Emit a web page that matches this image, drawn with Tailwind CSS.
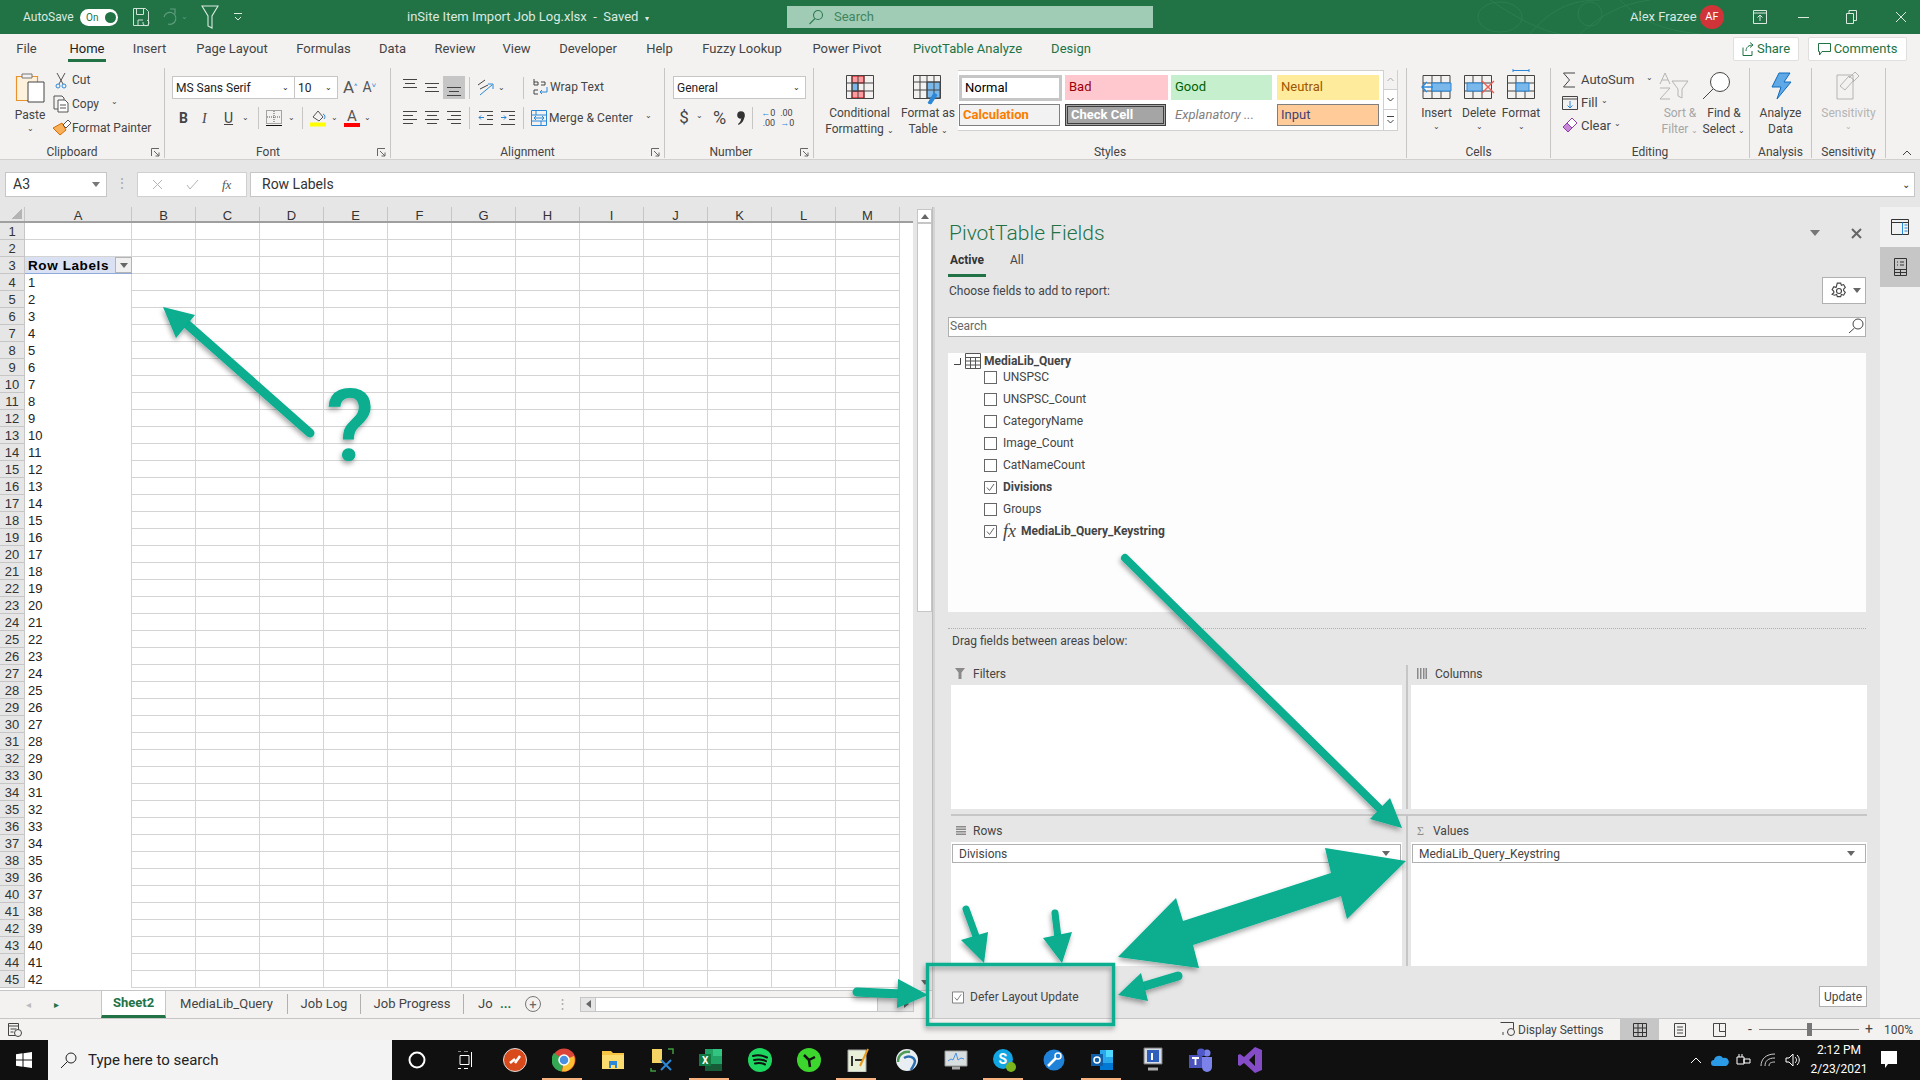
<!DOCTYPE html>
<html lang="en">
<head>
  <meta charset="UTF-8">
  <title>inSite Item Import Job Log.xlsx - Excel</title>
  <script src="https://cdn.jsdelivr.net/npm/@tailwindcss/browser@4"></script>
</head>
<body class="relative w-[1920px] h-[1080px] overflow-hidden flex flex-col bg-[#e6e6e6] text-[12px] text-[#444] font-['Roboto','Liberation_Sans',sans-serif]">

  <!-- title bar -->
  <header class="relative h-[34px] flex items-center bg-[#217346] text-[#dbe9e1] shrink-0">
    <svg class="absolute left-[1470px] top-0" width="240" height="34" fill="none" stroke="#2c7d50" stroke-width="1"><ellipse cx="30" cy="17" rx="22" ry="15"/><path d="M20 0c30 20 50 30 70 34M60 34C80 10 100 0 130 0M110 34c20-18 40-30 70-34M150 0c20 20 40 30 80 34"/><circle cx="120" cy="14" r="12"/></svg>
    <span class="ml-[23px] w-[57px]">AutoSave</span>
    <span class="w-[38px] h-[17px] rounded-full bg-white flex items-center justify-between pl-[6px] pr-[2px] text-[10px] text-[#217346]">On<i class="w-[11px] h-[11px] rounded-full bg-[#217346]"></i></span>
    <svg class="ml-[14px]" width="18" height="20" viewBox="0 0 18 20" fill="none" stroke="#cfe3d8"><path d="M1.5 1.5h12l3 3v14h-15zM4.500 1.500v6h7v-6M6 19v-6h5"/><path d="M11 15a3 3 0 1 0 4-2" stroke-width="1"/></svg>
    <svg class="ml-[11px]" width="16" height="18" viewBox="0 0 16 18" fill="none" stroke="#5d9c7b" stroke-width="1.200"><path d="M3 9a6 6 0 1 1 4 7M9 1h5v5"/></svg>
    <span class="ml-[4px] text-[8px] text-[#5d9c7b]">⌄</span>
    <svg class="ml-[13px]" width="18" height="24" viewBox="0 0 18 24" fill="none" stroke="#dbe9e1" stroke-width="1.100"><path d="M1 1h16l-6 10v12l-4-2V11z"/></svg>
    <svg class="ml-[15px]" width="8" height="10" viewBox="0 0 8 10" fill="none" stroke="#dbe9e1"><path d="M0 1.500h8M1 5l3 3 3-3"/></svg>
    <span class="ml-[165px] w-[264px] text-[13px] whitespace-nowrap">inSite Item Import Job Log.xlsx&nbsp; -&nbsp; Saved&nbsp; <i class="not-italic text-[8px]">▾</i></span>
    <div class="ml-[116px] w-[366px] h-[22px] bg-[#a0ccb5] flex items-center pl-[21px] text-[#4f8b6c]">
      <svg width="16" height="16" viewBox="0 0 16 16" fill="none" stroke="#2f7a52" stroke-width="1.100"><circle cx="10" cy="6" r="4.500"/><path d="M7 9.500 1.500 15"/></svg>
      <span class="ml-[10px] text-[13px] text-[#3f8560]">Search</span>
    </div>
    <span class="ml-[477px] text-[13px] w-[64px] whitespace-nowrap">Alex Frazee</span>
    <span class="ml-[6px] w-[24px] h-[24px] rounded-full bg-[#d13438] text-white text-[11px] flex items-center justify-center">AF</span>
    <svg class="ml-[29px]" width="14" height="14" viewBox="0 0 14 14" fill="none" stroke="#dbe9e1"><path d="M.5.500h13v13H.500zM.5 3h13M7 11V5M4.500 7.500 7 5l2.500 2.500"/></svg>
    <span class="ml-[31px] w-[11px] h-px bg-[#dbe9e1]"></span>
    <svg class="ml-[37px]" width="11" height="14" viewBox="0 0 11 14" fill="none" stroke="#dbe9e1"><path d="M.5 3.500h7v10h-7zM3 3.500v-3h7.500v10H7.500"/></svg>
    <svg class="ml-[38px]" width="12" height="12" viewBox="0 0 12 12" stroke="#dbe9e1"><path d="m1 1 10 10M11 1 1 11"/></svg>
  </header>

  <!-- tabs -->
  <nav class="relative h-[28px] shrink-0 flex items-center bg-[#f3f2f1] pt-[2px] text-[13px] text-[#444] whitespace-nowrap">
    <a class="ml-[17px] w-[19px] flex justify-center">File</a>
    <a class="relative ml-[32px] w-[38px] flex justify-center text-[#222] leading-[26px]">Home<i class="absolute left-0 right-0 bottom-0 h-[3px] bg-[#217346]"></i></a>
    <a class="ml-[27px] w-[33px] flex justify-center">Insert</a>
    <a class="ml-[30px] w-[72px] flex justify-center">Page Layout</a>
    <a class="ml-[29px] w-[53px] flex justify-center">Formulas</a>
    <a class="ml-[29px] w-[27px] flex justify-center">Data</a>
    <a class="ml-[29px] w-[40px] flex justify-center">Review</a>
    <a class="ml-[28px] w-[27px] flex justify-center">View</a>
    <a class="ml-[28px] w-[60px] flex justify-center">Developer</a>
    <a class="ml-[28px] w-[27px] flex justify-center">Help</a>
    <a class="ml-[30px] w-[78px] flex justify-center">Fuzzy Lookup</a>
    <a class="ml-[32px] w-[68px] flex justify-center">Power Pivot</a>
    <a class="ml-[33px] w-[107px] flex justify-center text-[#217346]">PivotTable Analyze</a>
    <a class="ml-[30px] w-[40px] flex justify-center text-[#217346]">Design</a>
    <a class="ml-[642px] w-[66px] h-[24px] bg-white border border-[#e1dfdd] rounded-[2px] flex items-center justify-center gap-[3px] text-[#217346]">
      <svg width="12" height="14" viewBox="0 0 12 14" fill="none" stroke="#217346"><path d="M1 5.500v8h9V9M4 9c0-4 3-6 7-6M8 .5 11 3 8 5.500"/></svg>Share</a>
    <a class="ml-[9px] w-[99px] h-[24px] bg-white border border-[#e1dfdd] rounded-[2px] flex items-center justify-center gap-[3px] text-[#217346]">
      <svg width="13" height="13" viewBox="0 0 13 13" fill="none" stroke="#217346"><path d="M.5.500h12v8H4L1.500 12V8.500h-1z"/></svg>Comments</a>
  </nav>

  <!-- ribbon -->
  <section class="relative h-[98px] shrink-0 flex bg-[#f3f2f1] border-b border-[#d2d0ce] pt-[6px] text-[12px] text-[#444] whitespace-nowrap">

    <!-- clipboard -->
    <div class="relative w-[165px] h-[90px] flex flex-col border-r border-[#c8c6c4]">
      <div class="flex h-[72px]">
        <div class="w-[53px] flex flex-col items-center pl-[7px]">
          <svg class="mt-[3px]" width="30" height="32" viewBox="0 0 30 32" fill="none"><path d="M1.500 5.500h21v24h-21z" fill="#fff2dc" stroke="#e8912d" stroke-width="1.200"/><path d="M7 3h10v4H7z" fill="#f3f2f1" stroke="#777"/><path d="M13 11h16v20H13z" fill="#fff" stroke="#444"/></svg>
          <span class="mt-[4px] leading-[16px]">Paste</span>
          <span class="text-[8px] leading-[12px]">⌄</span>
        </div>
        <div class="flex flex-col">
          <div class="h-[24px] flex items-center"><svg class="w-[19px]" width="19" height="17" viewBox="0 0 19 17" fill="none" stroke="#555"><path d="m4 1 6 11M12 1 6 12"/><circle cx="5" cy="14" r="2" stroke="#2b88d8"/><circle cx="11" cy="14" r="2" stroke="#2b88d8"/></svg><span>Cut</span></div>
          <div class="h-[24px] flex items-center"><svg width="19" height="18" viewBox="0 0 19 18" fill="none" stroke="#555"><path d="M1 1h8l2 2v11H1z" fill="#f3f2f1"/><path d="M5 5h7l3 3v9H5z" fill="#fff"/><path d="M7 10h6M7 13h6"/></svg><span>Copy</span><span class="ml-[12px] text-[8px] pb-[4px]">⌄</span></div>
          <div class="h-[24px] flex items-center"><svg width="19" height="16" viewBox="0 0 19 16"><path d="M0 8 9 3l4 7-6 5z" fill="#f9b05a" stroke="#d86c00"/><path d="m10 5 5-5 3 3-5 5z" fill="#fff" stroke="#555"/></svg><span>Format Painter</span></div>
        </div>
      </div>
      <div class="h-[18px] text-center leading-[24px] pr-[20px]">Clipboard</div>
      <svg class="absolute right-[4px] bottom-[1px]" width="9" height="9" viewBox="0 0 9 9" fill="none" stroke="#666"><path d="M.5 8V.500H8M3 3l5 5M8 4.500V8H4.500"/></svg>
    </div>

    <!-- font -->
    <div class="relative w-[226px] h-[90px] flex flex-col border-r border-[#c8c6c4] pl-[7px]">
      <div class="h-[72px] pt-[8px]">
        <div class="flex h-[23px] items-center">
          <div class="w-[123px] h-[23px] bg-white border border-[#c8c6c4] flex items-center justify-between pl-[3px] pr-[5px] text-[#222]">MS Sans Serif<span class="text-[8px]">⌄</span></div>
          <div class="w-[43px] h-[23px] bg-white border border-l-0 border-[#c8c6c4] flex items-center justify-between pl-[3px] pr-[5px] text-[#222]">10<span class="text-[8px]">⌄</span></div>
          <span class="ml-[5px] text-[17px] text-[#555]">A<sup class="text-[8px] text-[#2b88d8]">^</sup></span>
          <span class="ml-[5px] text-[14px] text-[#555]">A<sup class="text-[8px] text-[#2b88d8]">˅</sup></span>
        </div>
        <div class="flex h-[24px] mt-[7px] items-center text-[14px]">
          <span class="ml-[7px] w-[13px] font-bold">B</span>
          <span class="ml-[10px] w-[10px] italic font-['Liberation_Serif']">I</span>
          <span class="ml-[12px] w-[12px] underline">U</span>
          <span class="ml-[6px] text-[8px]">⌄</span>
          <i class="ml-[9px] w-px h-[22px] bg-[#c8c6c4]"></i>
          <svg class="ml-[7px]" width="16" height="16" viewBox="0 0 16 16" fill="none" stroke="#555" stroke-dasharray="1 1"><path d="M.5.500h15v13H.500zM8 1v12M1 7h14"/><path d="M0 15.500h16" stroke="#111" stroke-dasharray="none"/></svg>
          <span class="ml-[6px] text-[8px]">⌄</span>
          <i class="ml-[7px] w-px h-[22px] bg-[#c8c6c4]"></i>
          <svg class="ml-[7px]" width="16" height="18" viewBox="0 0 16 18" fill="none" stroke="#555"><path d="m3 8 5-6 5 6-4 4z"/><path d="M13 5a3 3 0 0 1 1 5" stroke="#2b88d8"/><path d="M0 15.500h16" stroke="#ff0" stroke-width="4"/></svg>
          <span class="ml-[5px] text-[8px]">⌄</span>
          <span class="relative ml-[6px] w-[16px] h-[18px] text-center leading-[14px] text-[15px] text-[#555]">A<i class="absolute left-0 right-0 bottom-0 h-[4px] bg-[#f00]"></i></span>
          <span class="ml-[4px] text-[8px]">⌄</span>
        </div>
      </div>
      <div class="h-[18px] text-center leading-[24px] pr-[26px]">Font</div>
      <svg class="absolute right-[4px] bottom-[1px]" width="9" height="9" viewBox="0 0 9 9" fill="none" stroke="#666"><path d="M.5 8V.500H8M3 3l5 5M8 4.500V8H4.500"/></svg>
    </div>

    <!-- alignment -->
    <div class="relative w-[274px] h-[90px] flex flex-col border-r border-[#c8c6c4]">
      <div class="h-[72px] pt-[8px] pl-[8px]">
        <div class="flex h-[23px] items-center">
          <svg width="22" height="23" viewBox="0 0 22 23" stroke="#444"><path d="M4 3.500h14M6 7.500h10M4 11.500h14"/></svg>
          <svg width="22" height="23" viewBox="0 0 22 23" stroke="#444"><path d="M4 7.500h14M6 11.500h10M4 15.500h14"/></svg>
          <span class="w-[22px] h-[23px] bg-[#c6c6c6] flex items-center"><svg width="22" height="23" viewBox="0 0 22 23" stroke="#444"><path d="M4 11.500h14M6 15.500h10M4 19.500h14"/></svg></span>
          <i class="ml-[4px] w-px h-[22px] bg-[#c8c6c4]"></i>
          <svg class="ml-[7px]" width="18" height="18" viewBox="0 0 18 18" fill="none" stroke="#444"><path d="m1 6 7-5M3 10l8-4"/><path d="m3 16 12-10M11 5h5v5" stroke="#2b88d8"/></svg>
          <span class="ml-[3px] text-[8px]">⌄</span>
          <i class="ml-[18px] w-px h-[22px] bg-[#c8c6c4]"></i>
          <svg class="ml-[9px]" width="17" height="19" viewBox="0 0 17 19" fill="none" stroke="#444"><path d="M1 1v6h4V4H1M8 4h4v3H8M5 12H1v4h4"/><path d="M14 9v5H7m2-2-2 2 2 2" stroke="#2b88d8"/></svg>
          <span class="leading-[13px] tracking-[.1px]">Wrap Text</span>
        </div>
        <div class="flex h-[24px] mt-[7px] items-center">
          <svg width="22" height="18" viewBox="0 0 22 18" stroke="#444"><path d="M4 2.500h14M4 6.500h10M4 10.500h14M4 14.500h10"/></svg>
          <svg width="22" height="18" viewBox="0 0 22 18" stroke="#444"><path d="M4 2.500h14M6 6.500h10M4 10.500h14M6 14.500h10"/></svg>
          <svg width="22" height="18" viewBox="0 0 22 18" stroke="#444"><path d="M4 2.500h14M8 6.500h10M4 10.500h14M8 14.500h10"/></svg>
          <i class="ml-[4px] w-px h-[22px] bg-[#c8c6c4]"></i>
          <svg class="ml-[8px]" width="16" height="16" viewBox="0 0 16 16" fill="none" stroke="#444"><path d="M1 1.500h14M9 5.500h6M9 9.500h6M1 14.500h14"/><path d="M6 7.500H1m2-2-2 2 2 2" stroke="#2b88d8"/></svg>
          <svg class="ml-[6px]" width="16" height="16" viewBox="0 0 16 16" fill="none" stroke="#444"><path d="M1 1.500h14M9 5.500h6M9 9.500h6M1 14.500h14"/><path d="M1 7.500h5m-2-2 2 2-2 2" stroke="#2b88d8"/></svg>
          <i class="ml-[7px] w-px h-[22px] bg-[#c8c6c4]"></i>
          <svg class="ml-[7px]" width="16" height="16" viewBox="0 0 16 16" fill="none" stroke="#2b88d8"><path d="M.5.500h15v15H.500zM.5 5h15M.5 11h15M5 .5V5M10 11v4.500"/><path d="M3 8h10M5 6 3 8l2 2M11 6l2 2-2 2"/></svg>
          <span class="ml-[2px] leading-[13px] tracking-[.1px]">Merge &amp; Center</span>
          <span class="ml-[12px] text-[8px] pb-[4px]">⌄</span>
        </div>
      </div>
      <div class="h-[18px] text-center leading-[24px]">Alignment</div>
      <svg class="absolute right-[4px] bottom-[1px]" width="9" height="9" viewBox="0 0 9 9" fill="none" stroke="#666"><path d="M.5 8V.500H8M3 3l5 5M8 4.500V8H4.500"/></svg>
    </div>

    <!-- number -->
    <div class="relative w-[149px] h-[90px] flex flex-col border-r border-[#c8c6c4] pl-[8px]">
      <div class="h-[72px] pt-[8px]">
        <div class="w-[133px] h-[23px] bg-white border border-[#c8c6c4] flex items-center justify-between pl-[3px] pr-[5px] text-[#222]">General<span class="text-[8px]">⌄</span></div>
        <div class="flex h-[24px] mt-[7px] items-center text-[#444]">
          <span class="ml-[5px] w-[12px] text-[17px] text-center">$</span>
          <span class="ml-[6px] text-[8px] pb-[4px]">⌄</span>
          <span class="ml-[10px] text-[18px] leading-[18px]">%</span>
          <svg class="ml-[11px]" width="8" height="14" viewBox="0 0 8 14" fill="#333"><circle cx="4" cy="4" r="3.800"/><path d="M7.500 4.500C7.500 9 5 12.500 1.500 14L1 13c2-1.500 3-3.500 3-5z"/></svg>
          <i class="ml-[7px] w-px h-[22px] bg-[#c8c6c4]"></i>
          <span class="ml-[5px] w-[17px] text-[9px] leading-[10px] text-right"><i class="not-italic text-[#2b88d8]">←</i>0<br>.00</span>
          <span class="ml-[5px] w-[17px] text-[9px] leading-[10px]">.00<br><i class="not-italic text-[#2b88d8]">→</i>0</span>
        </div>
      </div>
      <div class="h-[18px] text-center leading-[24px] pr-[24px]">Number</div>
      <svg class="absolute right-[4px] bottom-[1px]" width="9" height="9" viewBox="0 0 9 9" fill="none" stroke="#666"><path d="M.5 8V.500H8M3 3l5 5M8 4.500V8H4.500"/></svg>
    </div>

    <!-- styles -->
    <div class="w-[593px] h-[90px] flex flex-col border-r border-[#c8c6c4]">
      <div class="h-[72px] flex">
        <div class="w-[75px] ml-[8px] flex flex-col items-center">
          <svg class="mt-[7px]" width="28" height="24" viewBox="0 0 28 24" fill="none" stroke="#444"><path d="M6 1h12v7H6zM6 16h12v7H6z" fill="#ff9b9f" stroke="#c00"/><path d="M6 8h6v8H6z" fill="#7ab8ec"/><path d="M.5.500h27v23H.500zM.5 8h27M.5 16h27M6 .5v23M12 .5v23M18 .5v23"/></svg>
          <span class="mt-[6px] leading-[16px]">Conditional</span>
          <span class="leading-[16px]">Formatting <i class="not-italic text-[8px]">⌄</i></span>
        </div>
        <div class="w-[62px] flex flex-col items-center">
          <svg class="mt-[7px]" width="30" height="30" viewBox="0 0 30 30" fill="none" stroke="#444"><path d="M14 7h13v16H14z" fill="#7ab8ec"/><path d="M.5.500h27v23H.500zM.5 7h27M.5 15h27M7 .5v23M14 .5v23M21 .5v23"/><path d="m15 28 6-10 3 2-6 9z" fill="#2b88d8" stroke="#2b88d8"/></svg>
          <span class="leading-[16px]">Format as</span>
          <span class="leading-[16px]">Table <i class="not-italic text-[8px]">⌄</i></span>
        </div>
        <!-- cell styles gallery -->
        <div class="-ml-[1px] mt-[2px] w-[440px] h-[61px] flex bg-white border-y border-[#d2d0ce] text-[13px]">
          <div class="w-[425px] grid grid-cols-[106px_106px_106px_102px] grid-rows-[25px_22px] gap-y-[4px] pt-[4px] pl-[1px]">
            <div class="w-[103px] h-[26px] border-[3px] border-[#c6c6c6] bg-white text-black flex items-center pl-[3px] pb-[1px]">Normal</div>
            <div class="w-[103px] bg-[#ffc7ce] text-[#9c0006] flex items-center pl-[4px] pb-[1px]">Bad</div>
            <div class="w-[101px] bg-[#c6efce] text-[#006100] flex items-center pl-[4px] pb-[1px]">Good</div>
            <div class="bg-[#ffeb9c] text-[#9c5700] flex items-center pl-[4px] pb-[1px]">Neutral</div>
            <div class="w-[101px] bg-[#f2f2f2] border border-[#7f7f7f] text-[#fa7d00] font-bold flex items-center pl-[3px]">Calculation</div>
            <div class="w-[101px] bg-[#a5a5a5] border-[3px] border-double border-[#3f3f3f] text-white font-bold flex items-center pl-[3px]">Check Cell</div>
            <div class="w-[101px] text-[#7f7f7f] italic flex items-center pl-[4px]">Explanatory ...</div>
            <div class="bg-[#ffcc99] border border-[#7f7f7f] text-[#3f3f76] flex items-center pl-[3px]">Input</div>
          </div>
          <div class="w-[15px] flex flex-col border-x border-[#d2d0ce] -my-px bg-[#f3f2f1]">
            <span class="h-[20px] flex items-center justify-center"><svg width="7" height="5" viewBox="0 0 7 5" fill="none" stroke="#aaa"><path d="m.5 4 3-3 3 3"/></svg></span>
            <span class="h-[21px] flex items-center justify-center bg-white border-y border-[#d2d0ce]"><svg width="7" height="5" viewBox="0 0 7 5" fill="none" stroke="#444"><path d="m.5 1 3 3 3-3"/></svg></span>
            <span class="h-[22px] flex items-center justify-center bg-white border-b border-[#d2d0ce]"><svg width="7" height="8" viewBox="0 0 7 8" fill="none" stroke="#444"><path d="M0 .5h7M.5 4l3 3 3-3"/></svg></span>
          </div>
        </div>
      </div>
      <div class="h-[18px] text-center leading-[24px]">Styles</div>
    </div>

    <!-- cells -->
    <div class="w-[144px] h-[90px] flex flex-col border-r border-[#c8c6c4]">
      <div class="h-[72px] flex pl-[8px]">
        <div class="w-[43px] flex flex-col items-center">
          <svg class="mt-[7px]" width="32" height="24" viewBox="0 0 32 24" fill="none" stroke="#444"><path d="M2 .5h27v23H2zM2 8h27M2 16h27M11 .5v23M20 .5v23"/><path d="M11 8h19v8H11z" fill="#7ab8ec" stroke="#2b88d8"/><path d="M12 12H1m5-5-5 5 5 5" stroke="#2b88d8" stroke-width="1.500" fill="#fff"/></svg>
          <span class="mt-[6px] leading-[16px]">Insert</span><span class="text-[8px] leading-[12px]">⌄</span>
        </div>
        <div class="w-[42px] flex flex-col items-center">
          <svg class="mt-[7px]" width="32" height="24" viewBox="0 0 32 24" fill="none" stroke="#444"><path d="M1.500.5h27v23h-27zM1.500 8h27M1.500 16h27M10 .5v23M19 .5v23"/><path d="M4 8h15v8H4z" fill="#7ab8ec" stroke="#2b88d8"/><path d="m19 6 12 12M31 6 19 18" stroke="#f25c54" stroke-width="1.400"/></svg>
          <span class="mt-[6px] leading-[16px]">Delete</span><span class="text-[8px] leading-[12px]">⌄</span>
        </div>
        <div class="w-[42px] flex flex-col items-center">
          <svg class="mt-[1px]" width="28" height="30" viewBox="0 0 28 30" fill="none" stroke="#444"><path d="M6 1.500h16M6 0v3M22 0v3" stroke="#2b88d8"/><path d="M.5 6.500h27v23H.5zM.5 14h27M.5 22h27M9 6.500v23M18 6.500v23"/><path d="M9 14h13v8H9z" fill="#7ab8ec" stroke="#2b88d8"/></svg>
          <span class="mt-[6px] leading-[16px]">Format</span><span class="text-[8px] leading-[12px]">⌄</span>
        </div>
      </div>
      <div class="h-[18px] text-center leading-[24px]">Cells</div>
    </div>

    <!-- editing -->
    <div class="w-[199px] h-[90px] flex flex-col border-r border-[#c8c6c4]">
      <div class="h-[72px] flex pl-[11px]">
        <div class="w-[96px] flex flex-col">
          <div class="h-[23px] flex items-center"><svg width="19" height="16" viewBox="0 0 19 16" fill="none" stroke="#444"><path d="M13 1H1.500l6 7-6 7H13"/></svg><span class="text-[13px]">AutoSum</span><span class="ml-[12px] text-[8px] pb-[4px]">⌄</span></div>
          <div class="h-[23px] flex items-center"><svg width="19" height="14" viewBox="0 0 19 14" fill="none" stroke="#444"><path d="M.5.500h15v13H.500zM.5 3h15"/><path d="M8 5v7M5.500 9.500 8 12l2.500-2.500" stroke="#2b88d8"/></svg><span class="text-[13px]">Fill</span><span class="ml-[3px] text-[8px] pb-[4px]">⌄</span></div>
          <div class="h-[23px] flex items-center"><svg width="19" height="17" viewBox="0 0 19 17" stroke="#8f3fa8"><path d="m1 10 9-9 5 5-9 9z" fill="#fff"/><path d="m1 10 5 5 4-4-5-5z" fill="#c987d9"/></svg><span class="text-[13px]">Clear</span><span class="ml-[3px] text-[8px] pb-[4px]">⌄</span></div>
        </div>
        <div class="w-[44px] flex flex-col items-center text-[#a6a6a6]">
          <svg class="mt-[4px] -ml-[12px]" width="30" height="28" viewBox="0 0 30 28" fill="none" stroke="#b4b4b4"><path d="m1 12 5-11 5 11M3 8h6M1 16h10L1 27h10"/><path d="M13 9h16l-6 8v9l-4-2v-7z"/></svg>
          <span class="mt-[5px] leading-[16px]">Sort &amp;</span>
          <span class="leading-[16px]">Filter <i class="not-italic text-[8px]">⌄</i></span>
        </div>
        <div class="w-[44px] flex flex-col items-center">
          <svg class="mt-[4px] -ml-[16px]" width="30" height="28" viewBox="0 0 30 28" fill="none" stroke="#444"><circle cx="19" cy="10" r="9.500" fill="#fff"/><path d="m12 17-10 10"/></svg>
          <span class="mt-[5px] leading-[16px]">Find &amp;</span>
          <span class="leading-[16px]">Select <i class="not-italic text-[8px]">⌄</i></span>
        </div>
      </div>
      <div class="h-[18px] text-center leading-[24px]">Editing</div>
    </div>

    <!-- analysis -->
    <div class="w-[62px] h-[90px] flex flex-col border-r border-[#c8c6c4] items-center">
      <div class="h-[72px] flex flex-col items-center">
        <svg class="mt-[4px]" width="22" height="28" viewBox="0 0 22 28"><path d="M9 1h11l-6 9h7L7 27l4-12H2z" fill="#5ea9e6" stroke="#0f6cbd"/></svg>
        <span class="mt-[5px] leading-[16px]">Analyze</span><span class="leading-[16px]">Data</span>
      </div>
      <div class="h-[18px] leading-[24px]">Analysis</div>
    </div>

    <!-- sensitivity -->
    <div class="w-[74px] h-[90px] flex flex-col border-r border-[#c8c6c4] items-center">
      <div class="h-[72px] flex flex-col items-center text-[#b4b4b4]">
        <svg class="mt-[4px]" width="28" height="28" viewBox="0 0 28 28" fill="none" stroke="#b4b4b4"><path d="M2 3h16v24H2z"/><path d="m5 14 9-10 5 4-9 10zM14 6l6-6 4 4-6 6"/></svg>
        <span class="mt-[5px] leading-[16px]">Sensitivity</span><span class="text-[8px] leading-[12px]">⌄</span>
      </div>
      <div class="h-[18px] leading-[24px]">Sensitivity</div>
    </div>
    <svg class="absolute left-[1902px] bottom-[3px]" width="10" height="6" viewBox="0 0 10 6" fill="none" stroke="#444"><path d="m1 5 4-4 4 4"/></svg>
  </section>

  <!-- name box and formula bar -->
  <section class="h-[47px] shrink-0 flex bg-[#e6e6e6] pt-[12px] pl-[5px] pb-[10px] text-[14px] text-[#333]">
    <div class="w-[102px] h-[25px] bg-white border border-[#c6c6c6] flex items-center justify-between pl-[7px] pr-[6px]">A3<i class="w-0 h-0 border-x-[4px] border-t-[5px] border-x-transparent border-t-[#777]"></i></div>
    <div class="w-[30px] h-[25px] text-center text-[#aaa] leading-[22px]">⋮</div>
    <div class="w-[110px] h-[25px] bg-white border border-[#d2d0ce] flex items-center pl-[14px] text-[#aaa]">
      <svg width="11" height="11" viewBox="0 0 11 11" stroke="#b4b4b4"><path d="m1 1 9 9M10 1 1 10"/></svg>
      <svg class="ml-[23px]" width="13" height="11" viewBox="0 0 13 11" fill="none" stroke="#b4b4b4"><path d="m1 6 3 4 8-9"/></svg>
      <span class="ml-[23px] italic text-[13px] text-[#555] font-['Liberation_Serif']">fx</span>
    </div>
    <div class="ml-[3px] w-[1665px] h-[25px] bg-white border border-[#c6c6c6] flex items-center justify-between pl-[11px] pr-[4px]">Row Labels<span class="text-[10px]">⌄</span></div>
  </section>

  <!-- main -->
  <main class="h-[811px] shrink-0 flex">
    <div class="w-[932px] flex flex-col">
      <div class="h-[783px] flex">
        <div class="w-[913px] flex flex-col bg-white">
          <div id="colHead" class="h-[16px] flex bg-[#e6e6e6] border-b-2 border-[#9f9f9f] text-[13px] text-[#333] font-['Liberation_Sans']"></div>
          <div id="rows" class="font-['Liberation_Sans'] text-[13px] text-[#222]"></div>
        </div>
        <div class="w-[19px] pl-[4px] pt-[2px] flex flex-col bg-[#e6e6e6]">
          <div class="h-[14px] bg-white border border-[#c6c6c6] flex items-center justify-center"><i class="w-0 h-0 border-x-[4px] border-b-[5px] border-x-transparent border-b-[#666]"></i></div>
          <div class="h-[389px] bg-white border border-[#c6c6c6]"></div>
          <div class="flex-1"></div>
          <div class="h-[15px] flex items-center justify-center"><i class="w-0 h-0 border-x-[4px] border-t-[5px] border-x-transparent border-t-[#666]"></i></div>
        </div>
      </div>
      <!-- sheet tabs -->
      <div class="h-[28px] flex items-center bg-[#f3f2f1] border-t border-[#c6c6c6] pb-[1px] text-[13px] text-[#444] whitespace-nowrap">
        <span class="ml-[26px] w-[28px] text-[#bbb] text-[10px]">◂</span>
        <span class="w-[47px] text-[#217346] text-[10px]">▸</span>
        <span class="w-[65px] h-[27px] bg-white border-b-[3px] border-x border-x-[#c6c6c6] border-b-[#217346] flex items-center justify-center font-bold text-[#217346]">Sheet2</span>
        <span class="w-[122px] h-[20px] flex items-center justify-center border-r border-[#b0b0b0]">MediaLib_Query</span>
        <span class="w-[73px] h-[20px] flex items-center justify-center border-r border-[#b0b0b0]">Job Log</span>
        <span class="w-[103px] h-[20px] flex items-center justify-center border-r border-[#b0b0b0]">Job Progress</span>
        <span class="ml-[14px] w-[22px]">Jo</span>
        <span class="w-[25px] font-bold text-[#217346]">...</span>
        <span class="w-[16px] h-[16px] rounded-full border border-[#777] flex items-center justify-center leading-[13px] text-[#666]">+</span>
        <span class="ml-[15px] w-[24px] text-[#aaa]">⋮</span>
        <div class="w-[334px] h-[15px] flex bg-[#e6e6e6] border border-[#c6c6c6] items-center">
          <span class="w-[14px] flex justify-center"><i class="w-0 h-0 border-y-[4px] border-r-[5px] border-y-transparent border-r-[#666]"></i></span>
          <span class="w-[283px] h-full bg-white border-x border-[#c6c6c6]"></span>
          <span class="flex-1 flex justify-end pr-[4px]"><i class="w-0 h-0 border-y-[4px] border-l-[5px] border-y-transparent border-l-[#666]"></i></span>
        </div>
      </div>
    </div>
    <div class="w-[3px] bg-[#d4d4d4] border-l border-[#bdbdbd]"></div>

    <!-- pivot pane -->
    <aside class="w-[945px] pl-[13px] pr-[14px] flex flex-col text-[12px] text-[#444] whitespace-nowrap">
      <div class="h-[43px] flex items-center justify-between pt-[9px]">
        <h2 class="ml-[1px] text-[21px] leading-[28px] font-light text-[#217346]">PivotTable Fields</h2>
        <div class="flex items-center mr-[4px]">
          <i class="w-0 h-0 border-x-[5px] border-t-[6px] border-x-transparent border-t-[#777]"></i>
          <svg class="ml-[31px]" width="11" height="11" viewBox="0 0 11 11" stroke="#666" stroke-width="2"><path d="m1 1 9 9M10 1 1 10"/></svg>
        </div>
      </div>
      <div class="h-[27px] flex">
        <span class="w-[38px] h-[27px] border-b-[3px] border-[#217346] font-bold text-[#333] text-center leading-[21px]">Active</span>
        <span class="ml-[24px] leading-[21px]">All</span>
      </div>
      <div class="h-[27px] flex items-center justify-between">
        <span class="ml-[1px]">Choose fields to add to report:</span>
        <div class="w-[44px] h-[27px] bg-white border border-[#b0b0b0] flex items-center justify-center gap-[5px] pl-[2px]">
          <svg width="18" height="18" viewBox="0 0 16 16" fill="none" stroke="#444"><path d="m6.500 1h3l.6 2 2-.7 1.500 2.600-1.500 1.500v1.200l1.500 1.500-1.500 2.600-2-.7-.6 2h-3l-.6-2-2 .7L1.900 11l1.500-1.500V8.300L1.900 6.800l1.500-2.600 2 .7z"/><circle cx="8" cy="8" r="2.200"/></svg>
          <i class="w-0 h-0 border-x-[4px] border-t-[5px] border-x-transparent border-t-[#666]"></i>
        </div>
      </div>
      <div class="mt-[13px] h-[20px] bg-white border border-[#b0b0b0] flex items-center justify-between pl-[1px] pr-[1px] pb-[2px] text-[#666]">Search
        <svg width="16" height="16" viewBox="0 0 16 16" fill="none" stroke="#444"><circle cx="10" cy="6" r="5"/><path d="M6.500 10 1 15"/></svg>
      </div>

      <div class="mt-[16px] h-[259px] bg-[#fdfdfd] pt-px text-[#444]">
        <div class="h-[12px] flex items-center mt-px">
          <svg class="ml-[6px]" width="7" height="7" viewBox="0 0 7 7" fill="none" stroke="#444"><path d="M6.500 0v6.500H0"/></svg>
          <svg class="ml-[4px]" width="16" height="16" viewBox="0 0 16 16" fill="none" stroke="#555"><path d="M.5.500h15v15H.500zM.5 4.500h15M.5 8h15M.5 12h15M5.500 4.500v11M10.500 4.500v11"/></svg>
          <span class="ml-[3px] font-bold">MediaLib_Query</span>
        </div>
        <div class="pl-[36px] -mt-px">
          <div class="h-[22px] flex items-center"><i class="w-[13px] h-[13px] border border-[#666] bg-white"></i><span class="ml-[6px]">UNSPSC</span></div>
          <div class="h-[22px] flex items-center"><i class="w-[13px] h-[13px] border border-[#666] bg-white"></i><span class="ml-[6px]">UNSPSC_Count</span></div>
          <div class="h-[22px] flex items-center"><i class="w-[13px] h-[13px] border border-[#666] bg-white"></i><span class="ml-[6px]">CategoryName</span></div>
          <div class="h-[22px] flex items-center"><i class="w-[13px] h-[13px] border border-[#666] bg-white"></i><span class="ml-[6px]">Image_Count</span></div>
          <div class="h-[22px] flex items-center"><i class="w-[13px] h-[13px] border border-[#666] bg-white"></i><span class="ml-[6px]">CatNameCount</span></div>
          <div class="h-[22px] flex items-center"><svg width="13" height="13" viewBox="0 0 13 13" fill="#fff" stroke="#666"><path d="M.5.500h12v12H.500z"/><path d="m3 6.500 2.500 3L10 3" fill="none"/></svg><span class="ml-[6px] font-bold">Divisions</span></div>
          <div class="h-[22px] flex items-center"><i class="w-[13px] h-[13px] border border-[#666] bg-white"></i><span class="ml-[6px]">Groups</span></div>
          <div class="h-[22px] flex items-center"><svg width="13" height="13" viewBox="0 0 13 13" fill="#fff" stroke="#666"><path d="M.5.500h12v12H.500z"/><path d="m3 6.500 2.500 3L10 3" fill="none"/></svg><span class="ml-[6px] italic text-[18px] leading-[15px] font-['Liberation_Serif']">fx</span><span class="ml-[5px] font-bold">MediaLib_Query_Keystring</span></div>
        </div>
      </div>

      <div class="mt-[16px] h-px border-t border-dotted border-[#b0b0b0]"></div>
      <div class="h-[36px] ml-[4px] leading-[24px]">Drag fields between areas below:</div>

      <!-- areas -->
      <div class="ml-[3px] w-[916px] flex h-[144px]">
        <div class="w-[451px] flex flex-col"><div class="h-[20px] flex items-center gap-[8px] pl-[4px] pb-[3px]"><svg width="10" height="11" viewBox="0 0 10 11" fill="#8a8a8a"><path d="M0 0h10L6.500 4.500V11h-3V4.500z"/></svg><span>Filters</span></div><div class="flex-1 bg-white"></div></div>
        <div class="w-[9px] flex justify-center"><i class="w-[2px] h-full bg-[#c6c6c6]"></i></div>
        <div class="w-[456px] flex flex-col"><div class="h-[20px] flex items-center gap-[8px] pl-[6px] pb-[3px]"><svg width="10" height="11" viewBox="0 0 10 11" fill="#8a8a8a"><path d="M0 0h1.500v11H0zM3 0h1.500v11H3zM6 0h1.500v11H6zM8.500 0H10v11H8.500z"/></svg><span>Columns</span></div><div class="flex-1 bg-white"></div></div>
      </div>
      <div class="ml-[3px] w-[916px] h-[2px] mt-[5px] bg-[#c6c6c6]"></div>
      <div class="ml-[3px] w-[916px] flex h-[150px]">
        <div class="w-[451px] flex flex-col"><div class="h-[26px] flex items-center gap-[7px] pl-[5px] pt-[3px]"><svg width="10" height="9" viewBox="0 0 10 9" fill="#8a8a8a"><path d="M0 0h10v1.500H0zM0 2.500h10V4H0zM0 5h10v1.500H0zM0 7.500h10V9H0z"/></svg><span>Rows</span></div>
          <div class="flex-1 bg-white pt-[2px] px-px"><div class="h-[19px] border border-[#b0b0b0] flex items-center justify-between pl-[6px] pr-[10px]">Divisions<i class="w-0 h-0 border-x-[4px] border-t-[5px] border-x-transparent border-t-[#666]"></i></div></div></div>
        <div class="w-[9px] flex justify-center"><i class="w-[2px] h-full bg-[#c6c6c6]"></i></div>
        <div class="w-[456px] flex flex-col"><div class="h-[26px] flex items-center gap-[9px] pl-[6px] pt-[3px]"><span class="text-[#8a8a8a] text-[12px] font-['Liberation_Serif']">Σ</span><span>Values</span></div>
          <div class="flex-1 bg-white pt-[2px] px-px"><div class="h-[19px] border border-[#b0b0b0] flex items-center justify-between pl-[6px] pr-[10px]">MediaLib_Query_Keystring<i class="w-0 h-0 border-x-[4px] border-t-[5px] border-x-transparent border-t-[#666]"></i></div></div></div>
      </div>
      <div class="ml-[4px] w-[915px] h-[52px] flex items-start justify-between">
        <div class="mt-[22px] flex items-center"><svg width="12" height="13" viewBox="0 0 13 13" fill="#fff" stroke="#777"><path d="M.5.500h12v12H.500z"/><path d="m3 6.500 2.500 3L10 3" fill="none"/></svg><span class="ml-[6px]">Defer Layout Update</span></div>
        <div class="mt-[20px] w-[48px] h-[21px] bg-white border border-[#b0b0b0] flex items-center justify-center">Update</div>
      </div>
    </aside>

    <!-- task pane switcher -->
    <div class="w-[40px] bg-[#f1f1f1] flex flex-col">
      <div class="h-[40px] flex items-center justify-center"><svg width="18" height="16" viewBox="0 0 18 16" fill="none" stroke="#333"><path d="M.5.500h17v15H.500zM.5 3.500h17"/><path d="M11.500 3.500v12M13.500 6h3M13.500 9h3M13.500 12h3" stroke="#2b88d8"/></svg></div>
      <div class="h-[40px] bg-[#c6c6c6] flex items-center justify-center"><svg width="13" height="18" viewBox="0 0 13 18" fill="none" stroke="#333"><path d="M.5.500h12v17H.500zM.5 11.500h12M.5 14.500h12M6.500 11.500v6M3 4h1M3 7h1M6 4h4M6 7h4"/></svg></div>
    </div>
  </main>

  <!-- status bar -->
  <footer class="h-[22px] shrink-0 flex items-center bg-[#f3f2f1] border-t border-[#c6c6c6] text-[#444] whitespace-nowrap">
    <svg class="ml-[8px]" width="14" height="14" viewBox="0 0 14 14" fill="none" stroke="#444"><path d="M.5.500h10v12H.500zM.5 3h10M2.500 6h6M2.500 9h3"/><circle cx="10" cy="10" r="3.500" fill="#f3f2f1"/></svg>
    <svg class="ml-[1478px]" width="17" height="15" viewBox="0 0 17 15" fill="none" stroke="#444"><path d="M.5.500h13v10H7M3 10v3"/><circle cx="11" cy="10" r="3.500" fill="#f3f2f1"/></svg>
    <span class="w-[102px] ml-[1px]">Display Settings</span>
    <span class="w-[39px] h-[21px] bg-[#c6c6c6] flex items-center justify-center"><svg width="14" height="14" viewBox="0 0 14 14" fill="none" stroke="#333"><path d="M.5.500h13v13H.500zM.5 5h13M.5 9.500h13M5 .5v13M9.500.5v13"/></svg></span>
    <span class="w-[41px] flex justify-center"><svg width="12" height="14" viewBox="0 0 12 14" fill="none" stroke="#444"><path d="M.5.500h11v13H.500zM3 4h6M3 7h6M3 10h6"/></svg></span>
    <span class="w-[39px] flex justify-center"><svg width="13" height="14" viewBox="0 0 13 14" fill="none" stroke="#444"><path d="M.5.500h12v13H.500zM6.500.5v8H12"/></svg></span>
    <span class="ml-[6px] w-[10px] text-center text-[14px]">-</span>
    <span class="relative ml-[4px] w-[100px] h-px bg-[#888]"><i class="absolute left-[48px] -top-[6px] w-[5px] h-[13px] bg-[#777]"></i></span>
    <span class="ml-[5px] w-[10px] text-center text-[14px]">+</span>
    <span class="ml-[10px]">100%</span>
  </footer>

  <!-- taskbar -->
  <div class="h-[40px] shrink-0 flex items-center bg-[#101010]">
    <div class="w-[48px] flex justify-center"><svg width="16" height="16" viewBox="0 0 16 16" fill="#fff"><path d="M0 2.200 6.500 1.300v6.200H0zM7.500 1.200 16 0v7.500H7.500zM0 8.500h6.500v6.200L0 13.800zM7.500 8.500H16V16l-8.500-1.200z"/></svg></div>
    <div class="w-[344px] h-[40px] bg-[#f3f3f3] flex items-center pl-[12px] text-[15px] text-[#222]">
      <svg width="17" height="17" viewBox="0 0 17 17" fill="none" stroke="#222"><circle cx="11" cy="6" r="5"/><path d="M7.500 9.500 1 16"/></svg>
      <span class="ml-[11px]">Type here to search</span>
    </div>
    <div class="w-[49px] flex justify-center"><svg width="18" height="18" viewBox="0 0 18 18" fill="none" stroke="#fff" stroke-width="2"><circle cx="9" cy="9" r="7.500"/></svg></div>
    <div class="w-[49px] flex justify-center"><svg width="16" height="18" viewBox="0 0 16 18" fill="none" stroke="#fff"><path d="M2 4.500h9v9H2zM0 0h3M6 0h4M0 17.500h3M6 17.500h4M13.500 1v15"/></svg></div>
    <div class="w-[49px] flex justify-center"><svg width="24" height="24" viewBox="0 0 24 24"><circle cx="12" cy="12" r="11.500" fill="#d84a1b" stroke="#ddd"/><path d="m7 15 5-4M12 15l5-7" stroke="#fff" stroke-width="2.500"/></svg></div>
    <div class="relative w-[49px] flex justify-center"><svg width="24" height="24" viewBox="0 0 24 24"><circle cx="12" cy="12" r="11.500" fill="#db4437"/><path d="M12 12 22 8a11.500 11.500 0 0 1-12 15.500z" fill="#fbc02d"/><path d="M12 12 9.500 23.500A11.500 11.500 0 0 1 2 5z" fill="#34a853"/><circle cx="12" cy="12" r="5" fill="#4a90e2" stroke="#fff" stroke-width="1.500"/></svg><i class="absolute left-[3px] bottom-[-8px] w-[40px] h-[2px] bg-[#f7b27f]"></i></div>
    <div class="w-[49px] flex justify-center"><svg width="22" height="20" viewBox="0 0 22 20"><path d="M0 1h9l2 2h11v16H0z" fill="#f6c544"/><path d="M0 5h22v14H0z" fill="#fbdc6e"/><path d="M7 11h8v7h-2v-3H9v3H7z" fill="#2b88d8"/></svg></div>
    <div class="w-[49px] flex justify-center"><svg width="24" height="24" viewBox="0 0 24 24" fill="none"><path d="M2 1h10v14H2z" fill="#f6d365"/><path d="M1 20v3h5M18 1h5v5" stroke="#3f9c3f" stroke-width="1.500"/><path d="m11 12 10 10M21 12 11 22" stroke="#2b88d8" stroke-width="2"/></svg></div>
    <div class="relative w-[49px] flex justify-center"><svg width="24" height="24" viewBox="0 0 24 24"><path d="M6 1h17v22H6z" fill="#21a366"/><path d="M14 1h9v7h-9z" fill="#33c481"/><path d="M6 16h17v7H6z" fill="#185c37"/><path d="M0 6h12v12H0z" fill="#107c41"/><text x="3" y="15.500" font-size="10" font-weight="700" fill="#fff">X</text></svg><i class="absolute left-[3px] bottom-[-8px] w-[40px] h-[2px] bg-[#f7b27f]"></i></div>
    <div class="w-[49px] flex justify-center"><svg width="24" height="24" viewBox="0 0 24 24" fill="none"><circle cx="12" cy="12" r="12" fill="#1ed760"/><path d="M5 8c5-1.500 9-1 14 1.500M6 12c4-1 8-.8 12 1.200M7 15.500c3-.8 7-.6 10 1" stroke="#111" stroke-width="2" stroke-linecap="round"/></svg></div>
    <div class="w-[49px] flex justify-center"><svg width="24" height="24" viewBox="0 0 24 24" fill="none"><circle cx="12" cy="12" r="12" fill="#3dd62f"/><path d="M12 12 7 7M12 12l6-3M12 12l1 7" stroke="#111" stroke-width="2.500"/></svg></div>
    <div class="relative w-[49px] flex justify-center"><svg width="24" height="24" viewBox="0 0 24 24" fill="none"><path d="M2 2h18v22H2z" fill="#e9f0d9" stroke="#aaa"/><path d="M6 8v10M9 12h7" stroke="#333" stroke-width="2"/><path d="m14 18 8-17" stroke="#e99b1c" stroke-width="2"/></svg><i class="absolute left-[3px] bottom-[-8px] w-[40px] h-[2px] bg-[#f7b27f]"></i></div>
    <div class="w-[49px] flex justify-center"><svg width="24" height="24" viewBox="0 0 24 24" fill="none"><circle cx="12" cy="12" r="11" fill="#e8eef2"/><path d="M3 14c0-7 5-11 12-10" stroke="#4d9b57" stroke-width="2.500"/><path d="M9 10c5-3 10-1 11 3 0 4-3 6-4 9" stroke="#2b6fb0" stroke-width="2.500"/></svg></div>
    <div class="w-[49px] flex justify-center"><svg width="24" height="22" viewBox="0 0 24 22" fill="none"><path d="M1 2h22v15H1z" fill="#d8dde0" stroke="#999"/><path d="M4 12l3-2 2 1 3-7 2 7 3-2 3 1" stroke="#4a90e2"/><path d="M8 19h8" stroke="#aaa" stroke-width="3"/></svg></div>
    <div class="relative w-[49px] flex justify-center"><svg width="24" height="24" viewBox="0 0 24 24"><circle cx="10" cy="11" r="10" fill="#12a5e4"/><text x="5.500" y="16" font-size="14" font-weight="700" fill="#fff">S</text><circle cx="18" cy="19" r="5" fill="#7bb51e"/></svg><i class="absolute left-[3px] bottom-[-8px] w-[40px] h-[2px] bg-[#f7b27f]"></i></div>
    <div class="w-[49px] flex justify-center"><svg width="22" height="22" viewBox="0 0 22 22" fill="none"><circle cx="11" cy="11" r="10.500" fill="#1f82d8"/><path d="m5 17 8-8" stroke="#fff" stroke-width="2.500"/><circle cx="15" cy="7" r="3" stroke="#fff" stroke-width="1.500"/></svg></div>
    <div class="relative w-[49px] flex justify-center"><svg width="24" height="24" viewBox="0 0 24 24"><path d="M9 2h13v20H9z" fill="#28a8ea"/><path d="M15 2h7v7h-7z" fill="#50d9ff"/><path d="M9 15h13v7H9z" fill="#0078d4"/><path d="M0 6h12v12H0z" fill="#0f5ea8"/><circle cx="6" cy="12" r="3" fill="none" stroke="#fff" stroke-width="1.500"/></svg><i class="absolute left-[3px] bottom-[-8px] w-[40px] h-[2px] bg-[#f7b27f]"></i></div>
    <div class="w-[49px] flex justify-center"><svg width="24" height="26" viewBox="0 0 24 26" fill="none"><path d="M4 1h18v16H4z" fill="#d6dce6" stroke="#777"/><path d="M7 3h12v12H7z" fill="#2f5fbd"/><path d="M12 6v7" stroke="#fff" stroke-width="2"/><path d="M8 22h10" stroke="#aaa" stroke-width="3"/></svg></div>
    <div class="w-[49px] flex justify-center"><svg width="24" height="24" viewBox="0 0 24 24"><circle cx="18" cy="5" r="3.500" fill="#7b83eb"/><path d="M13 9h10v10a5 5 0 0 1-10 0z" fill="#7b83eb"/><circle cx="12" cy="4.500" r="4" fill="#5059c9"/><path d="M0 7h13v13H0z" fill="#4b53bc"/><path d="M3 10h7M6.500 10v7" stroke="#fff" stroke-width="1.800"/></svg></div>
    <div class="w-[49px] flex justify-center"><svg width="24" height="26" viewBox="0 0 24 26"><path d="m17 0 7 3v20l-7 3-11-10-4 3-2-1V8l2-1 4 3zm0 7-6 6 6 6z" fill="#854cc7"/></svg></div>
    <div class="ml-[410px] w-[24px] flex justify-center"><svg width="12" height="7" viewBox="0 0 12 7" fill="none" stroke="#fff"><path d="m1 6 5-5 5 5"/></svg></div>
    <div class="w-[24px] flex justify-center"><svg width="18" height="12" viewBox="0 0 18 12" fill="#2b9be8"><path d="M3 12a3 3 0 0 1 0-6 5 5 0 0 1 9-2 4 4 0 0 1 3 8z"/></svg></div>
    <div class="w-[24px] flex justify-center"><svg width="16" height="14" viewBox="0 0 16 14" fill="none" stroke="#fff"><path d="M1 4h7v7H1zM8 6h6v4H8zM3 1v3M6 1v3"/></svg></div>
    <div class="w-[24px] flex justify-center"><svg width="16" height="14" viewBox="0 0 16 14" fill="none" stroke="#ccc"><path d="M1 13C1 6 6 1 15 1M5 13c0-5 3-8 10-8M9 13c0-3 2-4 6-4"/></svg></div>
    <div class="w-[24px] flex justify-center"><svg width="15" height="14" viewBox="0 0 15 14" fill="none" stroke="#fff"><path d="M1 5h3l4-4v12l-4-4H1zM10 4c2 2 2 4 0 6M12 2c3 3 3 7 0 10"/></svg></div>
    <div class="w-[70px] text-center text-[#fff] text-[12px] leading-[19px]">2:12 PM<br>2/23/2021</div>
    <div class="ml-[7px] w-[16px]"><svg width="16" height="18" viewBox="0 0 16 18" fill="#fff"><path d="M0 0h16v13H7l-3 4v-4H0z"/></svg></div>
  </div>

  <!-- annotations drawn over the screenshot -->
  <svg class="absolute inset-0 pointer-events-none" width="1920" height="1080" viewBox="0 0 1920 1080" fill="#07ae8f">
    <defs><filter id="sh" x="-20%" y="-20%" width="140%" height="140%"><feDropShadow dx="-1" dy="3" stdDeviation="2.500" flood-color="#000" flood-opacity=".35"/></filter></defs>
    <g filter="url(#sh)">
      <path d="M310 433 181 319" stroke="#07ae8f" stroke-width="9" stroke-linecap="round"/>
      <path d="m163 307 32 8-19 23z"/>
      <text x="350" y="460" text-anchor="middle" font-family="Roboto, sans-serif" font-weight="500" font-size="100">?</text>

      <path d="m1125 558 255 251" stroke="#07ae8f" stroke-width="8" stroke-linecap="round"/>
      <path d="m1402 828-12-30-20 21z"/>

      <path d="m1406 861-81-13 6 25-148 48-7-23-58 59 81 11-6-23 148-49 6 23z"/>

      <path d="m966 909 11 30M1055 913l3 25" stroke="#07ae8f" stroke-width="7" stroke-linecap="round"/>
      <path d="m984 963-23-23 27-8zM1062 963l-19-25 29-6z"/>

      <path d="m1178 976-40 12" stroke="#07ae8f" stroke-width="9" stroke-linecap="round"/>
      <path d="m1118 995 23-22 7 28z"/>

      <path d="m857 992 45 2" stroke="#07ae8f" stroke-width="9" stroke-linecap="round"/>
      <path d="m928 995-30-16-1 29z"/>

      <rect x="927.500" y="964.500" width="186" height="60" fill="none" stroke="#07ae8f" stroke-width="3.500"/>
    </g>
  </svg>

  <script>
    // headers and grid are repetitive, so build them here
    const cols = ['B', 'C', 'D', 'E', 'F', 'G', 'H', 'I', 'J', 'K', 'L', 'M'];
    let head = '<div class="w-[25px] flex items-end justify-end border-r border-[#c6c6c6] p-[2px]"><i class="w-[11px] h-[11px] bg-[linear-gradient(135deg,transparent_50%,#b4b4b4_50%)]"></i></div>';
    head += '<div class="w-[107px] text-center border-r border-[#c6c6c6] leading-[17px]">A</div>';
    cols.forEach(c => { head += `<div class="w-[64px] text-center border-r border-[#c6c6c6] leading-[17px]">${c}</div>`; });
    document.getElementById('colHead').innerHTML = head;

    let blank = '';
    cols.forEach(() => { blank += '<div class="w-[64px] border-r border-b border-[#d4d4d4]"></div>'; });

    let html = '';
    for (let r = 1; r <= 45; r++) {
      let a = '<div class="w-[107px] border-r border-b border-[#d4d4d4]"></div>';
      if (r === 3) {
        a = '<div class="w-[107px] relative bg-[#d9e1f2] border-b border-[#8ea9db] pl-[3px] font-bold text-[13.500px] tracking-[.6px] leading-[17px] text-black">Row Labels<span class="absolute right-0 top-0 w-[17px] h-[16px] bg-[#f0f0f0] border border-[#b4b4b4] flex items-center justify-center"><i class="w-0 h-0 border-x-[4px] border-t-[5px] border-x-transparent border-t-[#666]"></i></span></div>';
      } else if (r > 3) {
        a = `<div class="w-[107px] border-r border-[#d4d4d4] pl-[3px] leading-[17px]">${r - 3}</div>`;
      }
      html += `<div class="h-[17px] flex"><div class="w-[25px] bg-[#e6e6e6] border-r border-b border-[#c6c6c6] text-center leading-[17px] text-[#333]">${r}</div>${a}${blank}</div>`;
    }
    document.getElementById('rows').innerHTML = html;
  </script>
</body>
</html>
